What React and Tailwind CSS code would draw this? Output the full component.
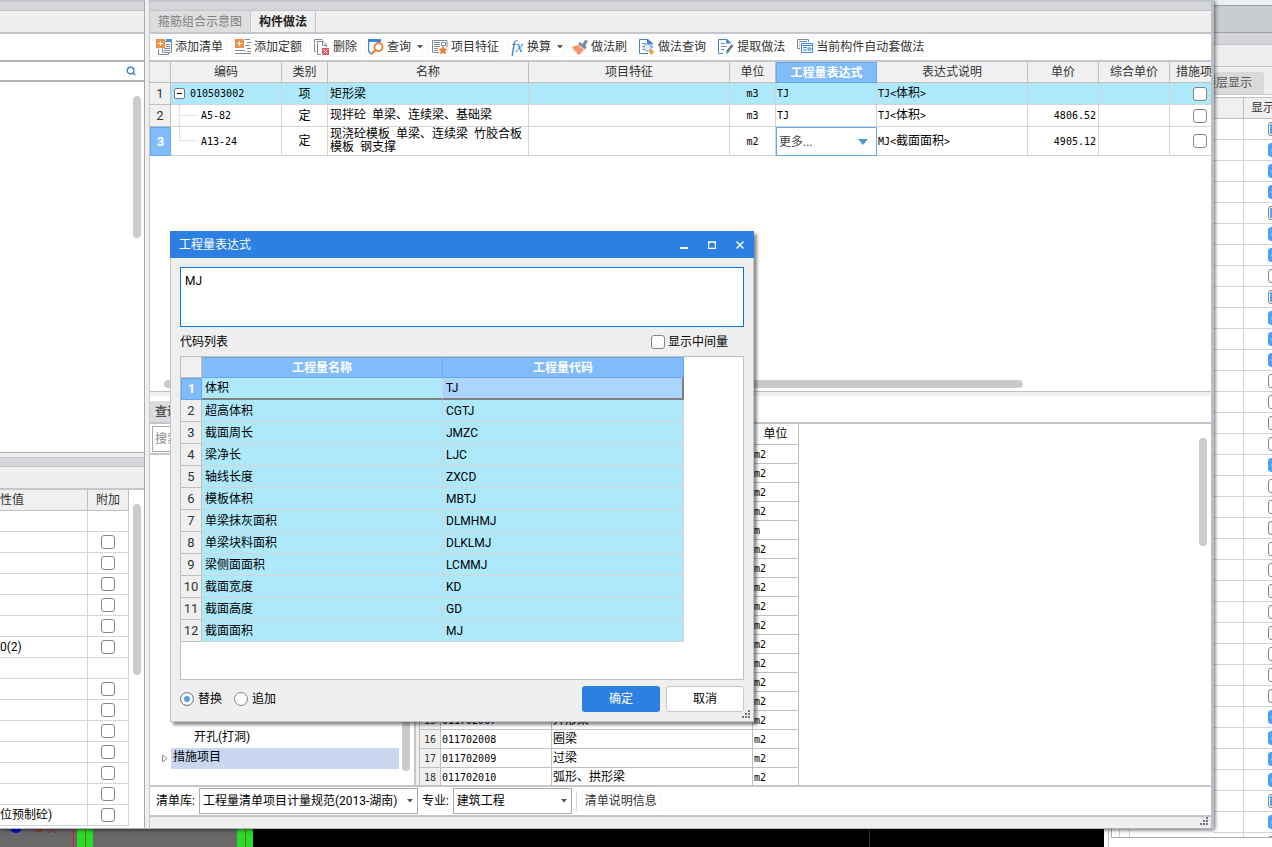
import React, { useState } from "react";
import clsx from "clsx";
import { Search } from "lucide-react";

const BILL_ROWS = [
  { code: "010503002", type: "项", name: "矩形梁", unit: "m3", expr: "TJ", note: "TJ<体积>", price: "" },
  { code: "A5-82", type: "定", name: "现拌砼 单梁、连续梁、基础梁", unit: "m3", expr: "TJ", note: "TJ<体积>", price: "4806.52" },
  { code: "A13-24", type: "定", name: "现浇砼模板 单梁、连续梁 竹胶合板模板 钢支撑", unit: "m2", expr: "更多...", note: "MJ<截面面积>", price: "4905.12" },
];

const CODES = [
  ["体积", "TJ"],
  ["超高体积", "CGTJ"],
  ["截面周长", "JMZC"],
  ["梁净长", "LJC"],
  ["轴线长度", "ZXCD"],
  ["模板体积", "MBTJ"],
  ["单梁抹灰面积", "DLMHMJ"],
  ["单梁块料面积", "DLKLMJ"],
  ["梁侧面面积", "LCMMJ"],
  ["截面宽度", "KD"],
  ["截面高度", "GD"],
  ["截面面积", "MJ"],
];

const QUOTA_ROWS = Array.from({ length: 18 }, (_, i) => ({
  no: i + 1,
  unit: i === 4 ? "m" : "m2",
  ...{
    14: { code: "011702007", name: "异形梁" },
    15: { code: "011702008", name: "圈梁" },
    16: { code: "011702009", name: "过梁" },
    17: { code: "011702010", name: "弧形、拱形梁" },
  }[i],
}));

const PROPS = Array.from({ length: 15 }, (_, i) => ({
  value: { 6: "0(2)", 14: "位预制砼)" }[i] || "",
  box: i !== 0 && i !== 7,
}));

// p = partly shown, c = shown, u = hidden
const FLOORS = "pcccpccupcccuuuucuuuuuuuuuuuccccpcu".split("");

const BAR = "bg-[#d4d5da] border-t-2 border-b border-t-[#c3c6cc] border-b-[#c3c6cc]";

// Latin runs are set in a 6px wide mono face so that they line up with half of a Chinese character
function Song({ children }) {
  return String(children)
    .split(/([\x20-\x7e]+)/)
    .filter(Boolean)
    .map((run, i) =>
      /[\x20-\x7e]/.test(run) ? (
        <span key={i} className="font-['DejaVu_Sans_Mono',monospace] text-[10px]">{run}</span>
      ) : (
        <span key={i}>{run}</span>
      )
    );
}

function Box({ label, state, className, ...rest }) {
  return (
    <input
      type="checkbox"
      aria-label={label}
      defaultChecked={state === "c"}
      className={clsx(
        "block size-[14px] shrink-0 appearance-none rounded-[3px] border border-[#858585] bg-white checked:border-[#4f9ff8] checked:bg-[#4f9ff8]",
        "before:block before:text-center before:text-[10px] before:leading-[12px] before:text-white checked:before:content-['✓']",
        state === "p" && "shadow-[inset_0_0_0_1px_#fff,inset_0_0_0_6px_#4f9ff8]",
        className
      )}
      {...rest}
    />
  );
}

function Caret({ className }) {
  return (
    <svg width="6" height="4" viewBox="0 0 6 4" className={className} aria-hidden="true">
      <path d="M0 0h6L3 3.5z" fill="#555" />
    </svg>
  );
}

function Grip() {
  return (
    <svg width="9" height="9" viewBox="0 0 9 9" fill="#6d737b" aria-hidden="true">
      <path d="M6 0h2v2h-2zM3 3h2v2h-2zM6 3h2v2h-2zM0 6h2v2h-2zM3 6h2v2h-2zM6 6h2v2h-2z" />
    </svg>
  );
}

const ICONS = {
  addList: (
    <>
      <path d="M9 2.500h6.500v11h-9v-4M12.500 13.500v2h-10v-6" fill="none" stroke="#7c8a99" />
      <path d="M10 0h6v3h-6z" fill="#4a8fe0" />
      <path d="M10 5.500h4M10 7.500h4M8 9.500h6M8 11.500h6" stroke="#7c8a99" />
      <path d="M0 0h9v9h-9z" fill="#f0914a" />
      <path d="M4.500 2v5M2 4.500h5" stroke="#fff" />
    </>
  ),
  addQuota: (
    <>
      <path d="M10 .500h5M12 3.500h4M10 6.500h5M12 9.500h4M0 11.500h10M0 14.500h16M12 12.500h4" stroke="#7c8a99" />
      <path d="M0 0h9v9h-9z" fill="#f0914a" />
      <path d="M4.500 2v5M2 4.500h5" stroke="#fff" />
    </>
  ),
  remove: (
    <>
      <path d="M2 12.500h-1.500v-12h7.500l1 1" fill="none" stroke="#7c8a99" />
      <path d="M7 15.500h-3.500v-13h5.500l3.500 3.500v2M8.500 2.500v4h4" fill="none" stroke="#7c8a99" />
      <path d="M8 9h7v7h-7z" fill="#d9545c" />
      <path d="M9.500 10.500l4 4M13.500 10.500l-4 4" stroke="#fff" />
    </>
  ),
  query: (
    <>
      <path d="M4 14.500H2.500L.500 12V1" fill="none" stroke="#3f83d6" strokeWidth="1.400" />
      <path d="M0 0h13v3h-13z" fill="#3f83d6" />
      <circle cx="10.500" cy="8" r="4" fill="#fff" stroke="#ee7f33" strokeWidth="1.800" />
      <path d="M7.500 11l-4 4" stroke="#ee7f33" strokeWidth="2.400" />
    </>
  ),
  feature: (
    <>
      <path d="M7 13.500H.500v-12h14.500v7" fill="none" stroke="#7c8a99" />
      <path d="M2 3.500h6M2 5.500h6M2 7.500h6M2 9.500h4M2 11.500h4M9.500 3.500h4v3h-4z" fill="none" stroke="#7c8a99" />
      <path d="M11 6.500l1.400 3 3.300.400-2.400 2.200.700 3.300-3-1.700-3 1.700.700-3.300-2.400-2.200 3.300-.400z" fill="#ee7a2e" />
    </>
  ),
  brush: (
    <>
      <path d="M0 8l6-2 6 5-5 5-3-2 1-2-2 .500z" fill="#fa9268" />
      <path d="M6 5l2-2 2.500 2L13 1l3 1-2.500 4.500 1 2-2 2z" fill="#7c8a99" />
    </>
  ),
  docQuery: (
    <>
      <path d="M9 14.500H.500V.500H9l4 3.500V9" fill="none" stroke="#3f83d6" />
      <path d="M8 0l6 5H8z" fill="#3f83d6" />
      <path d="M3 4.500h4M3 7.500h2M3 10.500h2" stroke="#7c8a99" />
      <circle cx="8.500" cy="8.500" r="3.500" fill="#e8f1fc" stroke="#7d9fd6" />
      <path d="M12.500 10l2.500 3-2.500 3-2.500-3z" fill="#f59a23" />
    </>
  ),
  extract: (
    <>
      <path d="M5 14.500H.500V.500H9l4 3.500" fill="none" stroke="#3f83d6" />
      <path d="M8 0l5 4.500H8z" fill="#3f83d6" />
      <path d="M3 4.500h4M3 7.500h6M3 10.500h3" stroke="#7c8a99" />
      <path d="M14.500 6l-5.500 7" stroke="#66727f" strokeWidth="2.500" />
      <path d="M9 11.500l2 1.500-3 2.500z" fill="#2a9fb5" />
    </>
  ),
  auto: (
    <>
      <path d="M3 9.500H.500V.500h11V3M2 2.500h8M3 5h-1M3 7h-1" fill="none" stroke="#7c8a99" />
      <path d="M4.500 4.500h11v9h-11z" fill="#fff" stroke="#3f83d6" />
      <path d="M5 6.500h10M6 8.500h4M6 11h4M11 9h3v2h-3z" fill="none" stroke="#3f83d6" />
    </>
  ),
};

const TOOLS = [
  { icon: "addList", label: "添加清单" },
  { icon: "addQuota", label: "添加定额" },
  { icon: "remove", label: "删除" },
  { icon: "query", label: "查询", menu: true },
  { icon: "feature", label: "项目特征" },
  { icon: "fx", label: "换算", menu: true },
  { icon: "brush", label: "做法刷" },
  { icon: "docQuery", label: "做法查询" },
  { icon: "extract", label: "提取做法" },
  { icon: "auto", label: "当前构件自动套做法" },
];

function Toolbar() {
  return (
    <div className="flex h-[28px] shrink-0 items-center gap-1 overflow-hidden border-b-2 border-[#c3c6cc] bg-white pl-[2px] text-[#333]">
      {TOOLS.map((t) => (
        <button
          key={t.label}
          className={clsx(
            "flex h-5 shrink-0 items-center gap-[3px] rounded-[3px] border border-[#f7f7f7]",
            t.menu ? "pl-[2px]" : "px-[3px]"
          )}
        >
          {t.icon === "fx" ? (
            <span className="w-[14px] font-['Liberation_Serif',serif] text-[16px] leading-[16px] italic text-[#2f7bd0]">fx</span>
          ) : (
            <svg width="16" height="16" viewBox="0 0 16 16" aria-hidden="true">{ICONS[t.icon]}</svg>
          )}
          <span>{t.label}</span>
          {t.menu && <Caret className="ml-[3px]" />}
        </button>
      ))}
    </div>
  );
}

const cell = "border-r border-b border-[#d4d4d4] p-0";
const head = "border-r border-b border-[#c0c0c0] bg-[#f0f0f0] p-0 font-normal text-[#333]";

function BillTable() {
  const [expr, setExpr] = useState("更多...");
  return (
    <table className="w-[1081px] table-fixed border-separate border-spacing-0">
      <colgroup>
        {[21, 111, 46, 201, 201, 46, 101, 151, 71, 71, 61].map((w, i) => (
          <col key={i} style={{ width: w }} />
        ))}
      </colgroup>
      <thead>
        <tr className="h-[21px]">
          {["", "编码", "类别", "名称", "项目特征", "单位", "工程量表达式", "表达式说明", "单价", "综合单价", "措施项目"].map((h, i) => (
            <th key={i} className={i === 6 ? "border border-[#67a8ea] bg-[#80bbfa] p-0 font-bold text-white" : head}>{h}</th>
          ))}
        </tr>
      </thead>
      <tbody className="text-black">
        {BILL_ROWS.map((r, i) => (
          <tr key={r.code} className={clsx(i === 2 ? "h-[29px]" : "h-[22px]", i === 0 && "bg-[#aee9fb]")}>
            <th className={i === 2 ? "border border-[#67a8ea] bg-[#80bbfa] p-0 text-[13px] font-bold text-white" : clsx(head, "text-[13px]")}>
              {i + 1}
            </th>
            <td className={cell}>
              {i === 0 ? (
                <div className="flex items-center gap-[5px] pl-[3px]">
                  <button aria-label="折叠" className="flex size-[11px] items-center justify-center rounded-[2px] border border-[#777] bg-white">
                    <span className="h-px w-[5px] bg-black" />
                  </button>
                  <Song>{r.code}</Song>
                </div>
              ) : (
                <div className="flex items-center">
                  <span className={clsx("ml-2 w-[17px] border-l border-[#e2e2e2]", i === 1 ? "h-[21px]" : "mb-[14px] h-[14px] border-b")}>
                    {i === 1 && <span className="mt-[10px] block h-px bg-[#e2e2e2]" />}
                  </span>
                  <span className="ml-[5px]"><Song>{r.code}</Song></span>
                </div>
              )}
            </td>
            <td className={clsx(cell, "text-center")}>{r.type}</td>
            <td className={clsx(cell, "pl-[2px] leading-[12px]")}><Song>{r.name}</Song></td>
            <td className={cell} />
            <td className={clsx(cell, "text-center")}><Song>{r.unit}</Song></td>
            {i === 2 ? (
              <td className="relative border border-[#67a8ea] p-0">
                <select
                  aria-label="工程量表达式"
                  value={expr}
                  onChange={(e) => setExpr(e.target.value)}
                  className="block h-[26px] w-full appearance-none bg-white pl-[2px] text-[#444]"
                >
                  <option>更多...</option>
                </select>
                <svg width="10" height="6" viewBox="0 0 10 6" className="pointer-events-none absolute top-[11px] right-2" aria-hidden="true">
                  <path d="M0 0h10L5 6z" fill="#4d9ad3" />
                </svg>
              </td>
            ) : (
              <td className={clsx(cell, "pl-px")}><Song>{r.expr}</Song></td>
            )}
            <td className={clsx(cell, "pl-px")}><Song>{r.note}</Song></td>
            <td className={clsx(cell, "pr-[2px] text-right")}><Song>{r.price}</Song></td>
            <td className={cell} />
            <td className={cell}><Box label="措施项目" className="mx-auto" /></td>
          </tr>
        ))}
      </tbody>
    </table>
  );
}

function LeftPane() {
  return (
    <aside className="flex w-[145px] shrink-0 flex-col border-r border-[#aaa]">
      <div className={clsx(BAR, "h-[11px] shrink-0")} />
      <div className="h-[23px] shrink-0 border-b-2 border-[#c3c6cc] bg-[#efefef]" />
      <div className="h-[28px] shrink-0 border-b-2 border-[#b4b4b4] bg-white" />
      <label className="flex h-[20px] shrink-0 items-center border-b-2 border-[#b4b4b4] bg-white pr-2">
        <input aria-label="搜索构件" className="min-w-0 flex-1 outline-none" />
        <Search size={10} strokeWidth={3.5} color="#3c8dc9" />
      </label>
      <div className="flex h-[371px] shrink-0 justify-end border-b border-[#aaa] bg-white pt-[14px] pr-[3px]">
        <div className="h-[142px] w-2 rounded-full bg-[#cbcbcb]" />
      </div>
      <div className="h-1 shrink-0 bg-[#efefef]" />
      <div className="h-[10px] shrink-0 border-y border-[#c3c6cc] bg-[#d4d5da]" />
      <div className="h-[23px] shrink-0 border-b-2 border-[#c3c6cc] bg-[#efefef]" />
      <div className="flex min-h-0 flex-1 overflow-hidden bg-white">
        <table className="h-fit w-[129px] table-fixed border-separate border-spacing-0 text-black">
          <colgroup>
            <col className="w-[88px]" />
            <col className="w-[41px]" />
          </colgroup>
          <thead>
            <tr className="h-[21px]">
              <th className={clsx(head, "text-left")}>性值</th>
              <th className={head}>附加</th>
            </tr>
          </thead>
          <tbody>
            {PROPS.map((p, i) => (
              <tr key={i} className="h-[21px]">
                <td className={cell}>{p.value}</td>
                <td className={cell}>{p.box && <Box label="附加" className="mx-auto" />}</td>
              </tr>
            ))}
          </tbody>
        </table>
        <div className="mt-[14px] ml-1 h-[171px] w-2 rounded-full bg-[#cbcbcb]" />
      </div>
    </aside>
  );
}

function Dropdown({ label, value, className }) {
  return (
    <label className="flex items-center gap-1">
      {label}
      <span className={clsx("relative", className)}>
        <select className="block h-[26px] w-full appearance-none border border-[#acacac] bg-white pl-[3px] text-black">
          <option>{value}</option>
        </select>
        <Caret className="pointer-events-none absolute top-[11px] right-[5px]" />
      </span>
    </label>
  );
}

function LowerPane() {
  return (
    <>
      <div className="flex h-[28px] shrink-0 items-end border-b-2 border-[#c3c6cc] bg-white">
        <button className="h-[21px] overflow-hidden rounded-tr bg-[#ddd] px-[5px] font-bold text-[#555]">查询</button>
      </div>
      <div className="flex min-h-0 flex-1 overflow-hidden bg-white">
        <div className="flex w-[266px] shrink-0 flex-col border-r-2 border-[#c3c6cc]">
          <div className="border-b-2 border-[#c3c6cc] p-[2px] pb-px">
            <input aria-label="搜索" placeholder="搜索" className="block h-[26px] w-full border border-[#aaa] pl-[2px] placeholder:text-[#888]" />
          </div>
          <div className="flex flex-1">
            <ul className="flex flex-1 flex-col justify-end pb-4 text-black">
              <li className="h-[21px] pl-[44px] leading-[20px]">开孔(打洞)</li>
              <li className="flex h-[21px] items-center">
                <svg width="8" height="9" viewBox="0 0 8 9" className="mr-[2px] ml-[11px] shrink-0" aria-hidden="true">
                  <path d="M1.500 1l4.500 3.500-4.500 3.500z" fill="none" stroke="#8b8b8b" />
                </svg>
                <span className="h-[21px] flex-1 bg-[#c9d8f0] pl-[2px] leading-[18px]">措施项目</span>
              </li>
            </ul>
            <div className="mt-2 mr-1 mb-[14px] ml-[3px] w-2 rounded-full bg-[#cbcbcb]" />
          </div>
        </div>
        <div className="w-[3px] shrink-0 bg-[#efefef]" />
        <table className="h-fit w-[380px] table-fixed border-separate border-spacing-0 border-l border-[#c0c0c0] text-black">
          <colgroup>
            <col className="w-[21px]" />
            <col className="w-[111px]" />
            <col className="w-[201px]" />
            <col className="w-[46px]" />
          </colgroup>
          <thead>
            <tr className="h-[21px]">
              {["", "编码", "名称", "单位"].map((h) => (
                <th key={h} className="border-r border-b border-[#c0c0c0] p-0 font-normal">{h}</th>
              ))}
            </tr>
          </thead>
          <tbody>
            {QUOTA_ROWS.map((r) => (
              <tr key={r.no} className="h-[19px]">
                <th className={head}><Song>{r.no}</Song></th>
                <td className="border-r border-b border-[#c0c0c0] p-0 pl-px leading-[15px]">{r.code && <Song>{r.code}</Song>}</td>
                <td className="border-r border-b border-[#c0c0c0] p-0 pl-px leading-[15px]">{r.name}</td>
                <td className="border-r border-b border-[#c0c0c0] p-0 pl-px leading-[15px]"><Song>{r.unit}</Song></td>
              </tr>
            ))}
          </tbody>
        </table>
        <div className="flex-1" />
        <div className="mt-[14px] mr-1 h-[108px] w-2 rounded-full bg-[#cbcbcb]" />
      </div>
      <div className="flex h-[32px] shrink-0 items-center gap-1 border-y-2 border-[#c3c6cc] bg-white pl-[6px] text-black">
        <Dropdown label="清单库:" value="工程量清单项目计量规范(2013-湖南)" className="w-[219px]" />
        <Dropdown label="专业:" value="建筑工程" className="w-[119px]" />
        <span className="h-5 w-px bg-[#d8d8d8]" />
        <button className="h-5 rounded-[3px] border border-[#f7f7f7] px-[3px] text-[#333]">清单说明信息</button>
      </div>
      <div className="flex h-[11px] shrink-0 items-start justify-end bg-[#efefef] pr-[2px]">
        <Grip />
      </div>
    </>
  );
}

function ExpressionDialog() {
  const [mode, setMode] = useState("替换");
  const [selected, setSelected] = useState(0);
  return (
    <section
      role="dialog"
      aria-label="工程量表达式"
      className="absolute top-[231px] left-[170px] z-20 flex w-[584px] flex-col bg-[#efefef] text-black shadow-[3px_3px_3px_rgba(0,0,0,0.45)]"
    >
      <header className="flex h-[27px] items-center bg-[#2c80e2] pl-[9px] text-white">
        <h2 className="flex-1">工程量表达式</h2>
        {["M0 7h8", "M0 1h8M.500 1v6.500h7v-6.500", "M.500.500l7 7M7.500.500l-7 7"].map((d, i) => (
          <button key={d} aria-label={["最小化", "最大化", "关闭"][i]} className="flex h-full w-7 items-center justify-center">
            <svg width="8" height="8" viewBox="0 0 8 8" aria-hidden="true">
              <path d={d} fill="none" stroke="#fff" strokeWidth={i === 0 ? 2 : 1.4} />
            </svg>
          </button>
        ))}
      </header>
      <div className="border-x border-b border-[#bcc6d3] px-[9px] pt-[9px]">
        <textarea
          aria-label="表达式"
          defaultValue="MJ"
          className="block h-[60px] w-full resize-none border border-[#0078d7] bg-white px-1 py-[5px] leading-[16px] outline-none"
        />
        <div className="flex h-[29px] items-center justify-between pr-4">
          <span>代码列表</span>
          <label className="flex items-center gap-[3px]">
            <Box />
            显示中间量
          </label>
        </div>
        <div className="h-[324px] border border-[#c0c0c0] bg-white">
          <table className="w-[503px] table-fixed border-separate border-spacing-0">
            <colgroup>
              <col className="w-[21px]" />
              <col className="w-[241px]" />
              <col className="w-[241px]" />
            </colgroup>
            <thead>
              <tr className="h-[21px]">
                <th className={head} />
                <th className="border-t border-r border-b border-[#67a8ea] bg-[#80bbfa] p-0 text-white">工程量名称</th>
                <th className="border-t border-r border-b border-[#67a8ea] bg-[#80bbfa] p-0 text-white">工程量代码</th>
              </tr>
            </thead>
            <tbody>
              {CODES.map(([name, code], i) => {
                const on = selected === i;
                return (
                  <tr key={code} className="h-[22px]" onClick={() => setSelected(i)}>
                    <th className={on ? "border border-[#67a8ea] bg-[#80bbfa] p-0 text-[13px] text-white" : clsx(head, "text-[13px]")}>{i + 1}</th>
                    <td className={clsx("bg-[#aee9fb] p-0 pl-[3px]", on ? "border-r border-b-2 border-r-[#d4d4d4] border-b-[#808080]" : "border-r border-b border-[#d4d4d4]")}>
                      {name}
                    </td>
                    <td className={clsx("p-0 pl-[3px]", on ? "border-r-2 border-b-2 border-[#808080] bg-[#abd5fd]" : "border-r border-b border-[#d4d4d4] bg-[#aee9fb]")}>
                      {code}
                    </td>
                  </tr>
                );
              })}
            </tbody>
          </table>
        </div>
        <div className="flex h-[41px] items-center gap-3 pb-[3px]">
          {["替换", "追加"].map((m) => (
            <label key={m} className="flex items-center gap-1">
              <input
                type="radio"
                name="mode"
                checked={mode === m}
                onChange={() => setMode(m)}
                className="size-[14px] appearance-none rounded-full border border-[#858585] bg-white checked:bg-[#4f9ff8] checked:shadow-[inset_0_0_0_3px_#fff]"
              />
              {m}
            </label>
          ))}
          <div className="ml-auto flex gap-[6px]">
            <button className="h-[26px] w-[78px] rounded-[3px] bg-[#2c80e2] text-white">确定</button>
            <button className="h-[26px] w-[78px] rounded-[3px] border border-[#c8c8c8] bg-white">取消</button>
          </div>
        </div>
      </div>
      <div className="absolute right-[3px] bottom-[3px]">
        <Grip />
      </div>
    </section>
  );
}

function FloorPanel() {
  return (
    <aside className="flex w-[58px] shrink-0 flex-col overflow-hidden bg-white">
      <div className="h-[6px] shrink-0 border-b border-[#9a9da2] bg-[#e9f0f0]" />
      <div className="h-[27px] shrink-0 border-b border-[#9a9da2] bg-[#c9ccd1]" />
      <div className="h-[12px] shrink-0 border-b border-[#c3c6cc] bg-[#d4d5da]" />
      <div className="h-[22px] shrink-0 border-b border-[#c3c6cc] bg-[#efefef]" />
      <div className="flex h-[28px] shrink-0 items-end border-b border-[#c3c6cc] bg-[#efefef]">
        <button className="flex h-[22px] w-[50px] items-center justify-end rounded-tr-[3px] bg-[#d9d9d9] pr-3 whitespace-nowrap text-[#555]">
          楼层显示
        </button>
      </div>
      <div className="h-[3px] shrink-0 border-b border-[#c0c0c0]" />
      <div className="mb-[9px] min-h-0 flex-1 overflow-hidden border-b border-[#aaa]">
        <table className="w-[92px] table-fixed border-separate border-spacing-0">
          <colgroup>
            <col className="w-[30px]" />
            <col className="w-[62px]" />
          </colgroup>
          <thead>
            <tr className="h-[21px]">
              <th className={head} />
              <th className={clsx(head, "pl-[7px] text-left")}>显示</th>
            </tr>
          </thead>
          <tbody>
            {FLOORS.map((s, i) => (
              <tr key={i} className="h-[21px]">
                <td className={cell} />
                <td className={cell}><Box label="显示" state={s} className="mx-auto" /></td>
              </tr>
            ))}
          </tbody>
        </table>
      </div>
    </aside>
  );
}

// strip of the drawing area that is left free under the window
function CanvasStrip() {
  return (
    <div className="flex h-[18px] shrink-0 bg-black">
      <div className="flex w-[253px] shrink-0 bg-[#696969]">
        <svg width="253" height="18" viewBox="0 0 253 18" aria-hidden="true">
          <circle cx="16" cy="-2" r="6" fill="#0b0bd0" />
          <path d="M34 3l8-4v3z" fill="#c01414" />
          <path d="M49 4l3-4 4 4" fill="none" stroke="#c01414" />
          <path d="M73.500 0v18" stroke="#c22" />
          <path d="M77 0h16v18h-16zM237 0h16v18h-16z" fill="#27dd27" />
          <path d="M85.500 0v18M245.500 0v18" stroke="#8a5a14" />
        </svg>
      </div>
      <div className="flex-1 border-r border-[#333]" />
      <div className="w-[234px] shrink-0" />
      <div className="flex w-[110px] shrink-0 bg-white pl-1">
        <div className="w-[3px] border-l border-[#c0c0c0]" />
        <div className="flex h-[9px] flex-1 border-b border-l border-[#aaa]">
          <span className="w-2 border-r border-[#d4d4d4]" />
          <span className="w-[10px] border-r border-[#d4d4d4]" />
        </div>
      </div>
    </div>
  );
}

export default function App() {
  return (
    <div
      lang="zh-CN"
      className="flex h-screen overflow-hidden bg-white font-[Roboto,'Noto_Sans_CJK_SC',sans-serif] text-[12px] leading-[16px]"
    >
      <div className="flex min-w-0 flex-1 flex-col">
        <main className="relative z-10 flex min-h-0 flex-1 border-r-[3px] border-b border-r-[#b9bec7] border-b-[#a9b4c2] bg-[#efefef] shadow-[1px_1px_4px_rgba(0,0,0,0.6)]">
          <LeftPane />
          <div className="w-1 shrink-0" />
          <div className="flex min-w-0 flex-1 flex-col border-l border-[#c3c6cc]">
            <div className={clsx(BAR, "h-[11px] shrink-0")} />
            <div className="flex h-[23px] shrink-0 border-b-2 border-[#c3c6cc] bg-[#efefef]">
              <button className="w-[101px] border-r border-[#c3c6cc] bg-[#dedede] text-[#808080]">箍筋组合示意图</button>
              <button className="w-[65px] border-r border-[#c3c6cc] font-bold text-[#222]">构件做法</button>
            </div>
            <Toolbar />
            <div className="flex h-[330px] shrink-0 flex-col justify-between overflow-hidden border-b border-[#c0c0c0] bg-white">
              <BillTable />
              <div className="mb-[3px] ml-[14px] h-2 w-[81%] rounded-full bg-[#cbcbcb]" />
            </div>
            <div className="h-1 shrink-0 bg-[#efefef]" />
            <LowerPane />
          </div>
          <ExpressionDialog />
        </main>
        <CanvasStrip />
      </div>
      <FloorPanel />
    </div>
  );
}
